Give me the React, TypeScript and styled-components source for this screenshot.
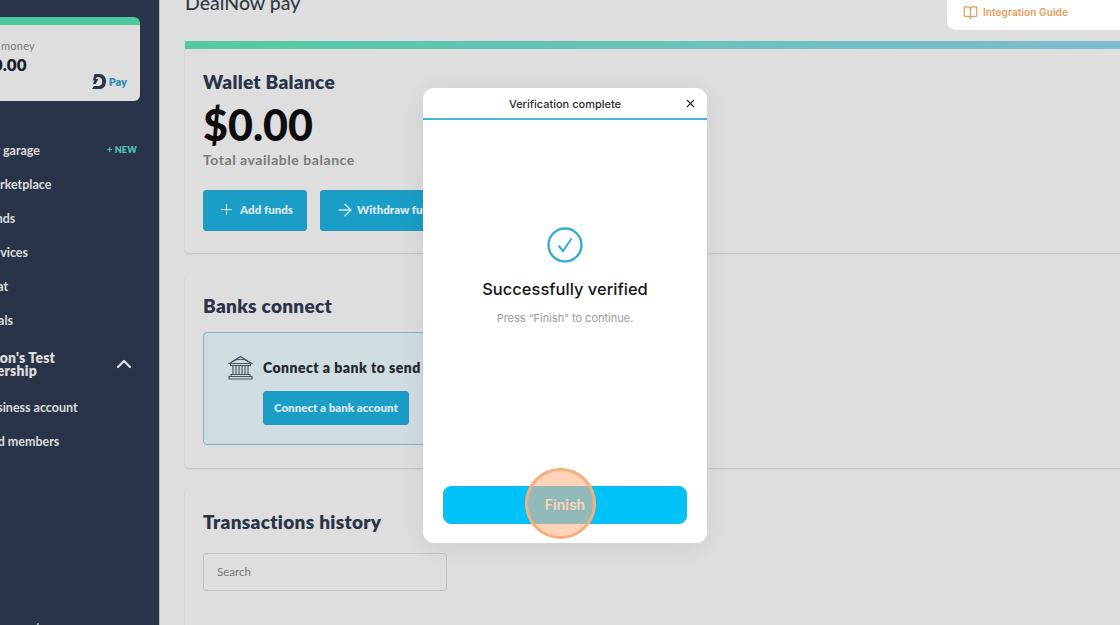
import * as React from "react";
import styled, { createGlobalStyle } from "styled-components";
import { ArrowRight, BookOpen, ChevronUp, Plus, X } from "lucide-react";

const GlobalStyle = createGlobalStyle`
  html, body {
    margin: 0;
    padding: 0;
    background: #dedede;
    font-family: "Lato", "Liberation Sans", sans-serif;
  }
  * { box-sizing: border-box; }
`;

const navItems = ["My garage", "Marketplace", "Funds", "Services", "Chat", "Deals"];

export default function App() {
  return (
    <Page>
      <GlobalStyle />
      <Sidebar>
        <MoneyCard>
          <MoneyLabel>Available money</MoneyLabel>
          <MoneyValue>$0.00</MoneyValue>
          <PayLogo>
            <svg width="14" height="15" viewBox="0 0 14 15" aria-hidden="true">
              <path d="M2.6 0H7.4C11.4 0 14 3 14 7.4C14 11.9 11.3 15 7 15H0L1.9 11.9H6.7C9 11.9 10.2 10 10.2 7.5C10.2 5 9 3.2 6.9 3.2H4.6L3.7 5H6.4L3.6 10H0.9L2.4 6.6H0.8Z" fill="#2a3449" />
            </svg>
            <PayText>Pay</PayText>
          </PayLogo>
        </MoneyCard>
        <Nav>
          {navItems.map((item) => (
            <NavItem key={item}>
              <span>{item}</span>
              {item === "My garage" && <NewTag>+ NEW</NewTag>}
            </NavItem>
          ))}
          <GroupRow>
            <GroupTitle>Carlson's Test Dealership</GroupTitle>
            <ChevronUp size={24} strokeWidth={2.2} color="#e2e2e2" />
          </GroupRow>
          <NavItem>Business account</NavItem>
          <NavItem>Add members</NavItem>
        </Nav>
        <SidebarFoot>Documents</SidebarFoot>
      </Sidebar>

      <Main>
        <TopRow>
          <PageTitle>DealNow pay</PageTitle>
          <GuideCard>
            <BookOpen size={15} strokeWidth={2} />
            Integration Guide
          </GuideCard>
        </TopRow>

        <BalanceCard>
          <CardTitle>Wallet Balance</CardTitle>
          <Balance>$0.00</Balance>
          <BalanceNote>Total available balance</BalanceNote>
          <ButtonRow>
            <ActionButton $gap={5}>
              <Plus size={17} strokeWidth={1.6} />
              Add funds
            </ActionButton>
            <ActionButton $gap={2}>
              <ArrowRight size={20} strokeWidth={1.6} />
              Withdraw funds
            </ActionButton>
          </ButtonRow>
        </BalanceCard>

        <BanksCard>
          <CardTitle>Banks connect</CardTitle>
          <BankBox>
            <svg width="25" height="25" viewBox="0 0 25 25" fill="none" stroke="#4a5160" strokeWidth="1.1" aria-hidden="true">
              <path d="M1.5 8.5L12.5 1.5L23.5 8.5Z" />
              <path d="M5 6.5C8 3.5 17 3.5 20 6.5" />
              <path d="M2.5 8.5V10.5H22.5V8.5" />
              <path d="M5 10.5V19.5M8 10.5V19.5M11 10.5V19.5M14 10.5V19.5M17 10.5V19.5M20 10.5V19.5" />
              <path d="M3 19.5H22V21.5H3ZM1 21.5H24V24H1Z" />
            </svg>
            <BankBody>
              <BankText>Connect a bank to send and receive funds</BankText>
              <BankButton>Connect a bank account</BankButton>
            </BankBody>
          </BankBox>
        </BanksCard>

        <HistoryCard>
          <CardTitle>Transactions history</CardTitle>
          <SearchInput placeholder="Search" />
        </HistoryCard>
      </Main>

      <Modal>
        <ModalHeader>
          Verification complete
          <CloseIcon>
            <X size={13} strokeWidth={2} color="#222" />
          </CloseIcon>
        </ModalHeader>
        <ModalBody>
          <svg width="36" height="36" viewBox="0 0 36 36" aria-hidden="true">
            <circle cx="18" cy="18" r="16.5" fill="none" stroke="#36aed2" strokeWidth="2.4" />
            <path d="M11.5 18.5L16 24L24.5 11.5" fill="none" stroke="#36aed2" strokeWidth="2" />
          </svg>
          <ModalTitle>Successfully verified</ModalTitle>
          <ModalNote>Press “Finish” to continue.</ModalNote>
          <FinishButton>Finish</FinishButton>
        </ModalBody>
      </Modal>
      <ClickMarker />
    </Page>
  );
}

const Page = styled.div`
  position: relative;
  display: flex;
  width: 1120px;
  height: 625px;
  overflow: hidden;
  background: #dedede;
`;

const Sidebar = styled.aside`
  display: flex;
  flex-direction: column;
  flex: 0 0 160px;
  height: 625px;
  padding-top: 17px;
  overflow: hidden;
  background: #2a3449;
  border-right: 1px solid #b9bcc2;
`;

const MoneyCard = styled.div`
  position: relative;
  flex: 0 0 84px;
  width: 170px;
  margin-left: -30px;
  padding: 14px 0 0 13px;
  background: #dedede;
  border-top: 8px solid #4fc9a2;
  border-radius: 6px;
`;

const MoneyLabel = styled.div`
  margin-left: -30px;
  font-size: 11px;
  line-height: 14px;
  letter-spacing: 0.2px;
  color: #7c7c7c;
`;

const MoneyValue = styled.div`
  margin-top: 2px;
  font-size: 17px;
  line-height: 20px;
  font-weight: 800;
  color: #16232c;
`;

const PayLogo = styled.div`
  position: absolute;
  right: 13px;
  bottom: 12px;
  display: flex;
  align-items: center;
  gap: 3px;
`;

const PayText = styled.span`
  font-size: 11px;
  font-weight: 800;
  color: #2f8db5;
`;

const Nav = styled.nav`
  display: flex;
  flex-direction: column;
  margin: 32px 23px 0 -18px;
`;

const NavItem = styled.div`
  display: flex;
  align-items: center;
  justify-content: space-between;
  height: 34px;
  font-size: 12.5px;
  font-weight: 700;
  color: #dcdcdc;
  white-space: nowrap;
`;

const NewTag = styled.span`
  margin: -2px -1px 0 0;
  font-size: 9px;
  font-weight: 800;
  color: #4fc3b4;
  letter-spacing: 0.2px;
`;

const GroupRow = styled.div`
  display: flex;
  align-items: center;
  justify-content: space-between;
  height: 38px;
  margin: 8px 0 7px -15px;
`;

const GroupTitle = styled.div`
  width: 106px;
  font-size: 14px;
  line-height: 13px;
  font-weight: 800;
  letter-spacing: 0.2px;
  color: #dcdcdc;
`;

const SidebarFoot = styled.div`
  margin: auto 0 -11px -18px;
  font-size: 12.5px;
  line-height: 17px;
  font-weight: 700;
  color: #c8ccd4;
`;

const Main = styled.main`
  flex: 1;
  min-width: 0;
  padding-left: 25px;
  overflow: hidden;
`;

const TopRow = styled.div`
  display: flex;
  align-items: flex-start;
  justify-content: space-between;
  height: 41px;
`;

const PageTitle = styled.h1`
  margin: -9px 0 0;
  font-size: 19.5px;
  line-height: 24px;
  font-weight: 500;
  color: #333a46;
`;

const GuideCard = styled.div`
  display: flex;
  align-items: center;
  gap: 5px;
  width: 173px;
  height: 30px;
  padding: 0 0 6px 16px;
  font-family: "Inter", sans-serif;
  font-size: 10.2px;
  font-weight: 600;
  color: #e59d5c;
  background: #fff;
  border-bottom-left-radius: 9px;
`;

const Card = styled.section`
  margin-right: -20px;
  padding-left: 18px;
  background: #dedede;
  border-radius: 4px;
  box-shadow: 0 1px 2px rgba(0, 0, 0, 0.14);
`;

const BalanceCard = styled(Card)`
  height: 212px;
  padding-top: 22px;
  border-top: 8px solid transparent;
  border-image: linear-gradient(90deg, #54c9a3, #7fbbd2) 1;
`;

const BanksCard = styled(Card)`
  height: 193px;
  margin-top: 22px;
  padding-top: 20px;
`;

const HistoryCard = styled(Card)`
  height: 180px;
  margin-top: 20px;
  padding-top: 23px;
`;

const CardTitle = styled.h2`
  margin: 0;
  font-size: 19px;
  line-height: 22px;
  font-weight: 800;
  letter-spacing: 0.3px;
  color: #2a3449;
`;

const Balance = styled.div`
  margin-top: 10px;
  font-size: 43px;
  line-height: 44px;
  font-weight: 900;
  color: #0d0d0d;
`;

const BalanceNote = styled.div`
  margin-top: 4px;
  font-size: 14px;
  line-height: 18px;
  font-weight: 700;
  letter-spacing: 0.55px;
  color: #7b7b7b;
`;

const ButtonRow = styled.div`
  display: flex;
  gap: 13px;
  margin-top: 21px;
`;

const ActionButton = styled.button<{ $gap: number }>`
  display: flex;
  align-items: center;
  gap: ${(p) => p.$gap}px;
  height: 41px;
  padding: 0 13px 2px 14px;
  font: 800 11.5px "Lato", sans-serif;
  color: #d6e6ea;
  background: #1a9ec7;
  border: 1px solid #2a95b8;
  border-radius: 3px;
`;

const BankBox = styled.div`
  display: flex;
  gap: 10px;
  width: 420px;
  height: 113px;
  margin-top: 15px;
  padding: 22px 0 0 24px;
  background: #cfdce0;
  border: 1px solid #7fb3c4;
  border-radius: 4px;
`;

const BankBody = styled.div`
  display: flex;
  flex-direction: column;
  align-items: flex-start;
  gap: 10px;
`;

const BankText = styled.div`
  font-size: 14px;
  line-height: 26px;
  font-weight: 800;
  letter-spacing: 0.47px;
  color: #24282f;
  white-space: nowrap;
`;

const BankButton = styled.button`
  height: 34px;
  padding: 0 10px 2px;
  font: 800 11.5px "Lato", sans-serif;
  color: #d6e6ea;
  background: #1a9ec7;
  border: 1px solid #2a95b8;
  border-radius: 3px;
`;

const SearchInput = styled.input`
  display: block;
  width: 244px;
  height: 38px;
  margin-top: 20px;
  padding: 0 13px 1px;
  font: 400 11.5px "Lato", sans-serif;
  background: transparent;
  border: 1px solid #c2c4c6;
  border-radius: 3px;
  &::placeholder {
    color: #777;
  }
`;

const Modal = styled.div`
  position: absolute;
  top: 88px;
  left: 423px;
  display: flex;
  flex-direction: column;
  width: 284px;
  height: 455px;
  overflow: hidden;
  background: #fff;
  border-radius: 11px;
  box-shadow: 0 4px 24px rgba(0, 0, 0, 0.08);
`;

const ModalHeader = styled.div`
  position: relative;
  flex: 0 0 32px;
  padding-top: 9px;
  font-family: "Inter", sans-serif;
  font-size: 11px;
  line-height: 14px;
  font-weight: 500;
  text-align: center;
  color: #2b2b2b;
  border-bottom: 2px solid #45b5d4;
`;

const CloseIcon = styled.span`
  position: absolute;
  top: 9px;
  right: 10px;
`;

const ModalBody = styled.div`
  display: flex;
  flex: 1;
  flex-direction: column;
  align-items: center;
  padding: 107px 20px 19px;
`;

const ModalTitle = styled.div`
  margin-top: 16px;
  font-family: "Inter", sans-serif;
  font-size: 16.5px;
  line-height: 20px;
  font-weight: 500;
  color: #161616;
`;

const ModalNote = styled.div`
  margin-top: 12px;
  font-family: "Inter", sans-serif;
  font-size: 11px;
  line-height: 14px;
  color: #9a9a9a;
`;

const FinishButton = styled.button`
  width: 244px;
  height: 38px;
  margin-top: auto;
  padding-bottom: 2px;
  font: 600 14px "Inter", sans-serif;
  color: #fff;
  background: #00c2fb;
  border: 1px solid #1fb8e6;
  border-radius: 8px;
`;

const ClickMarker = styled.div`
  position: absolute;
  top: 468px;
  left: 525px;
  width: 71px;
  height: 71px;
  background: rgba(255, 180, 135, 0.57);
  border: 3px solid #f5ae7e;
  border-radius: 50%;
`;
